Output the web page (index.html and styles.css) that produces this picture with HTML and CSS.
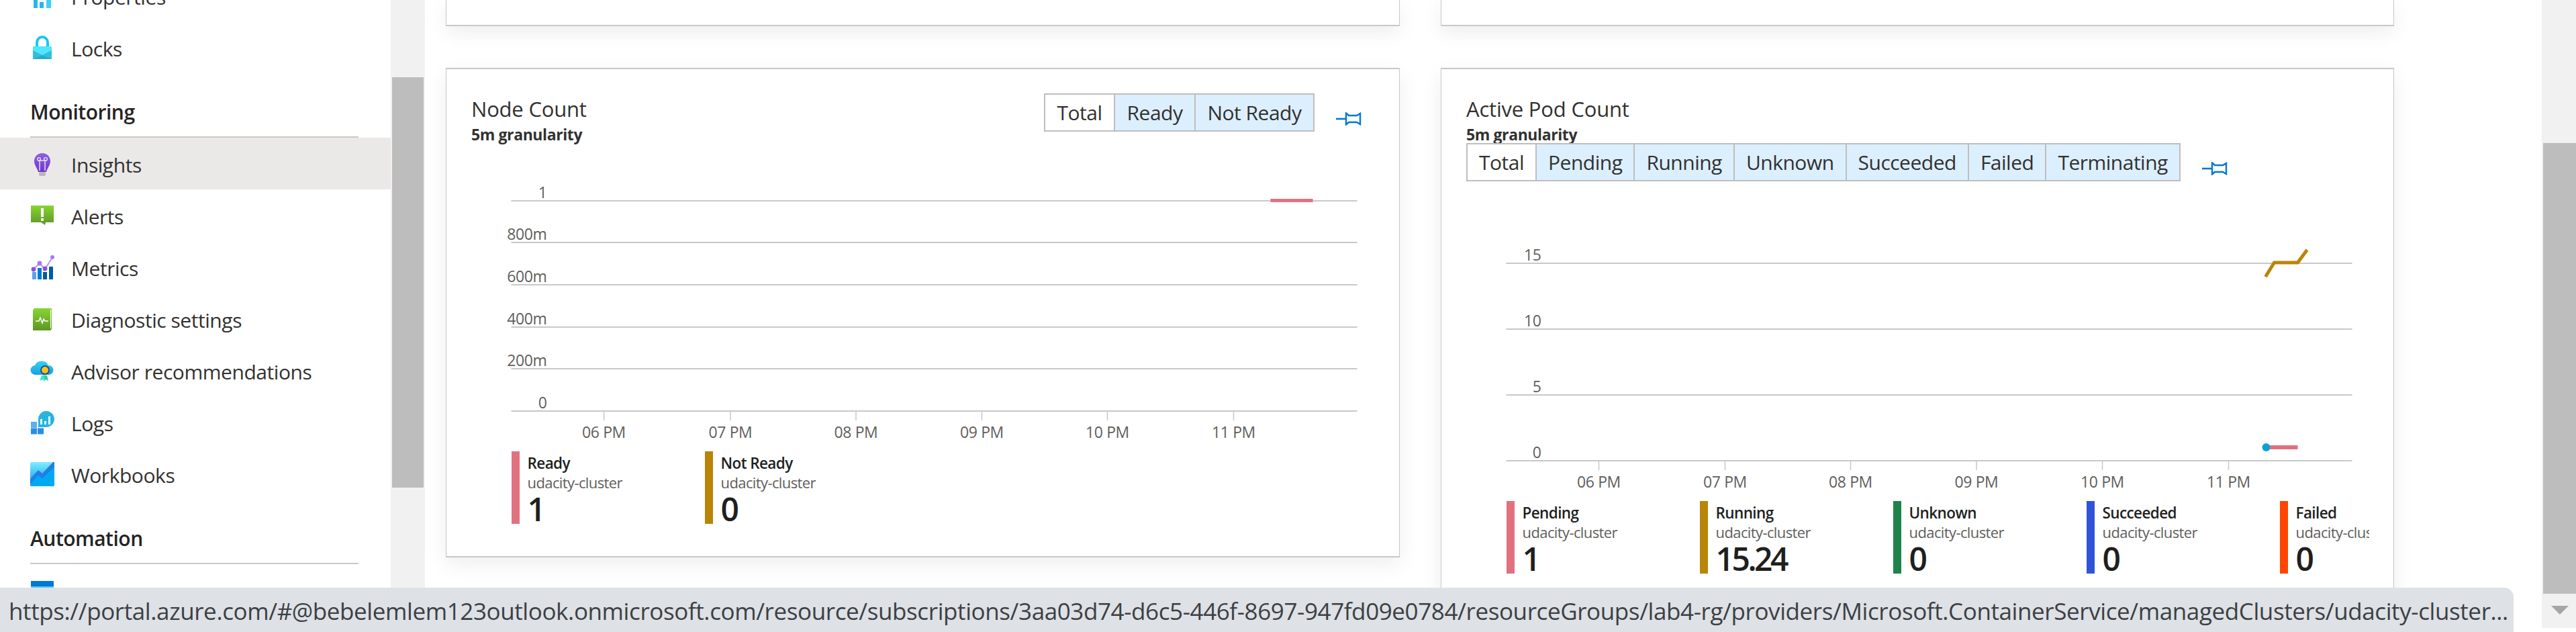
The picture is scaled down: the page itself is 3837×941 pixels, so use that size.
FILE: index.html
```html
<!DOCTYPE html>
<html lang="en">
<head>
<meta charset="utf-8">
<title>udacity-cluster | Insights</title>
<link rel="stylesheet" href="styles.css">
</head>
<body>
<div class="app">
  <nav class="sidebar">
    <ul class="menu">
      <li class="row"><svg class="ico" viewBox="0 0 36 36"><rect x="5" y="22" width="6" height="14" fill="#2bb5e8"/><rect x="14" y="27" width="6" height="9" fill="#2bb5e8"/><rect x="15" y="20" width="4" height="4" fill="#0f7fc4"/><rect x="24" y="22" width="7" height="14" fill="#3fd0f5"/></svg><span>Properties</span></li>
      <li class="row"><svg class="ico" viewBox="0 0 36 36"><path d="M8 17V10a10 10 0 0 1 20 0v7h-4V10a6 6 0 0 0-12 0v7z" fill="#1cc7ee"/><rect x="4" y="16" width="28" height="19" rx="1" fill="#50e6ff"/><path d="M4 35V22l14 7 14-7v13z" fill="#32bedd"/><path d="M4 35l14-6 14 6z" fill="#2aa9cf"/></svg><span>Locks</span></li>
    </ul>
    <h2 class="section">Monitoring</h2>
    <ul class="menu">
      <li class="row selected"><svg class="ico" viewBox="0 0 36 36"><defs><linearGradient id="gb" x1="0" y1="0" x2="0" y2="1"><stop offset="0" stop-color="#8f5fe6"/><stop offset="1" stop-color="#6c3ac6"/></linearGradient></defs><path d="M18 2c7 0 12 5 12 12 0 6-4 9-6 16H12C10 23 6 20 6 14 6 7 11 2 18 2z" fill="url(#gb)"/><rect x="13" y="30" width="10" height="6" rx="2" fill="#b9b9b9"/><path d="M14 28V13M22 28V13M12 13h12" stroke="#e8dcff" stroke-width="1.5" fill="none"/><circle cx="13" cy="11" r="2.4" fill="none" stroke="#e8dcff" stroke-width="1.3"/><circle cx="23" cy="11" r="2.4" fill="none" stroke="#e8dcff" stroke-width="1.3"/></svg><span>Insights</span></li>
      <li class="row"><svg class="ico" viewBox="0 0 36 36"><defs><linearGradient id="ga" x1="0" y1="0" x2="0" y2="1"><stop offset="0" stop-color="#86d633"/><stop offset="1" stop-color="#5e9624"/></linearGradient></defs><path d="M1 3h34v25H23l-1 4-6-4H1z" fill="url(#ga)"/><rect x="16" y="7" width="4" height="13" fill="#fff"/><rect x="16" y="22" width="4" height="4" fill="#fff"/></svg><span>Alerts</span></li>
      <li class="row"><svg class="ico" viewBox="0 0 36 36"><rect x="3" y="25" width="6" height="11" fill="#5ea0ef"/><rect x="11" y="19" width="6" height="17" fill="#0078d4"/><rect x="19" y="25" width="6" height="11" fill="#005ba1"/><rect x="28" y="17" width="6" height="19" fill="#005ba1"/><path d="M5 21l9-9 8 9 11-18" stroke="#b796f9" stroke-width="2" fill="none"/><circle cx="5" cy="21" r="3.4" fill="#8c4fe0"/><circle cx="14" cy="12" r="3.4" fill="#a67af4"/><circle cx="22" cy="20" r="3.4" fill="#8c4fe0"/><circle cx="33" cy="3" r="3" fill="#a67af4"/></svg><span>Metrics</span></li>
      <li class="row"><svg class="ico" viewBox="0 0 36 36"><defs><linearGradient id="gd" x1="0" y1="0" x2="0" y2="1"><stop offset="0" stop-color="#86d633"/><stop offset="1" stop-color="#5e9624"/></linearGradient></defs><path d="M4 5l2-3h26v31l-2 2H4z" fill="url(#gd)"/><path d="M30 4h1v28h-1z" fill="#fff"/><path d="M8 21h5l2-5 3 8 2-6 2 3h5" stroke="#fff" stroke-width="1.5" fill="none"/></svg><span>Diagnostic settings</span></li>
      <li class="row"><svg class="ico" viewBox="0 0 36 36"><defs><linearGradient id="gc" x1="0" y1="0" x2="0" y2="1"><stop offset="0" stop-color="#32d4f5"/><stop offset="1" stop-color="#1b9de2"/></linearGradient></defs><path d="M8 24a7 7 0 0 1-1-14A11 11 0 0 1 27 10a7 7 0 0 1 1 14z" fill="url(#gc)"/><path d="M17 25l-3 8 5-2 1 3 2-10z" fill="#45e0c8"/><path d="M25 25l2 8-4-2-2 3v-9z" fill="#2fc8b0"/><circle cx="22" cy="17" r="7" fill="#1c4f94"/><circle cx="22" cy="17" r="5" fill="#ffc10e"/></svg><span>Advisor recommendations</span></li>
      <li class="row"><svg class="ico" viewBox="0 0 36 36"><rect x="1" y="17" width="9" height="9" fill="#5ab0f0"/><rect x="1" y="26.500" width="9" height="9" fill="#2a8fe0"/><rect x="11" y="26.500" width="9" height="9" fill="#2a8fe0"/><path d="M12 25V14a12 12 0 1 1 12 11z" fill="#28b4dc"/><rect x="15" y="13" width="3" height="8" fill="#e8fbff"/><rect x="21" y="16" width="3" height="5" fill="#e8fbff"/><rect x="27" y="9" width="3" height="12" fill="#e8fbff"/></svg><span>Logs</span></li>
      <li class="row"><svg class="ico" viewBox="0 0 36 36"><defs><linearGradient id="gw" x1="0" y1="0" x2="0" y2="1"><stop offset="0" stop-color="#7eeeff"/><stop offset="1" stop-color="#0094e6"/></linearGradient></defs><rect width="36" height="36" rx="2" fill="url(#gw)"/><path d="M0 25l12-13 6 5L34 0h2v8L18 25l-6-5L0 33z" fill="#1f7fe6"/><path d="M0 33l12-13 6 5L36 8v26a2 2 0 0 1-2 2H2a2 2 0 0 1-2-2z" fill="#00aaf0"/></svg><span>Workbooks</span></li>
    </ul>
    <h2 class="section">Automation</h2>
    <ul class="menu menu-last">
      <li class="row"><svg class="ico" viewBox="0 0 36 36"><rect x="1" width="34" height="8" fill="#0078d4"/><rect x="1" y="8" width="34" height="24" fill="#50c8f0"/></svg><span>CLI / PS</span></li>
    </ul>
  </nav>
  <div class="track"><div class="thumb thumb-left"></div></div>
  <main class="main">
    <section class="card stub"></section>
    <section class="card stub"></section>

    <section class="card card-node">
      <div class="head">
        <div class="titles">
          <h3 class="title">Node Count</h3>
          <p class="sub">5m granularity</p>
        </div>
        <div class="controls node-controls">
          <div class="toggle">
            <button class="tab">Total</button><button class="tab on">Ready</button><button class="tab on">Not Ready</button>
          </div>
          <svg class="pin" viewBox="0 0 38 20"><path d="M0 10h14" stroke="#0078d4" stroke-width="2.600"/><path d="M15 1.500l4 3.500h12l5-3v16l-5-3H19l-4 3.500z" fill="#fff" stroke="#0078d4" stroke-width="2.400"/></svg>
        </div>
      </div>
      <svg class="chart chart-node" viewBox="702.500 213 1380 453">
        <g class="grid"><path d="M762 299H2022M762 361H2022M762 424H2022M762 487H2022M762 549H2022M762 612H2022"/><path class="tick" d="M900 612v14M1088.500 612v14M1275.500 612v14M1463 612v14M1650 612v14M1838 612v14"/></g>
        <g class="ylab"><text x="815" y="295">1</text><text x="815" y="357">800m</text><text x="815" y="420">600m</text><text x="815" y="483">400m</text><text x="815" y="545">200m</text><text x="815" y="608">0</text></g>
        <g class="xlab"><text x="900" y="652">06 PM</text><text x="1088.500" y="652">07 PM</text><text x="1275.500" y="652">08 PM</text><text x="1463" y="652">09 PM</text><text x="1650" y="652">10 PM</text><text x="1838" y="652">11 PM</text></g>
        <rect x="1893" y="296" width="63" height="5" fill="#e2717f"/>
      </svg>
      <div class="legend">
        <div class="item c-red"><span class="l-name">Ready</span><span class="l-sub">udacity-cluster</span><span class="l-val">1</span></div>
        <div class="item c-gold"><span class="l-name">Not Ready</span><span class="l-sub">udacity-cluster</span><span class="l-val">0</span></div>
      </div>
    </section>

    <section class="card card-pod">
      <div class="head head-col">
        <div class="titles">
          <h3 class="title">Active Pod Count</h3>
          <p class="sub">5m granularity</p>
        </div>
        <div class="controls">
          <div class="toggle">
            <button class="tab">Total</button><button class="tab on">Pending</button><button class="tab on">Running</button><button class="tab on">Unknown</button><button class="tab on">Succeeded</button><button class="tab on">Failed</button><button class="tab on">Terminating</button>
          </div>
          <svg class="pin" viewBox="0 0 38 20"><path d="M0 10h14" stroke="#0078d4" stroke-width="2.600"/><path d="M15 1.500l4 3.500h12l5-3v16l-5-3H19l-4 3.500z" fill="#fff" stroke="#0078d4" stroke-width="2.400"/></svg>
        </div>
      </div>
      <svg class="chart chart-pod" viewBox="2184.500 270 1380 470">
        <g class="grid"><path d="M2244 392H3504M2244 490H3504M2244 588H3504M2244 686H3504"/><path class="tick" d="M2382 686v14M2570 686v14M2757 686v14M2944.500 686v14M3132 686v14M3320 686v14"/></g>
        <g class="ylab"><text x="2296" y="388">15</text><text x="2296" y="486">10</text><text x="2296" y="584">5</text><text x="2296" y="682">0</text></g>
        <g class="xlab"><text x="2382" y="726">06 PM</text><text x="2570" y="726">07 PM</text><text x="2757" y="726">08 PM</text><text x="2944.500" y="726">09 PM</text><text x="3132" y="726">10 PM</text><text x="3320" y="726">11 PM</text></g>
        <path d="M3375 412L3388 391H3423L3437 372" fill="none" stroke="#ba8408" stroke-width="5"/>
        <rect x="3376" y="663" width="47" height="6" fill="#e2717f"/>
        <ellipse cx="3376" cy="666" rx="6" ry="6" fill="#0e9fd6"/>
      </svg>
      <div class="legend">
        <div class="item c-red"><span class="l-name">Pending</span><span class="l-sub">udacity-cluster</span><span class="l-val">1</span></div>
        <div class="item c-gold"><span class="l-name">Running</span><span class="l-sub">udacity-cluster</span><span class="l-val">15.24</span></div>
        <div class="item c-green"><span class="l-name">Unknown</span><span class="l-sub">udacity-cluster</span><span class="l-val">0</span></div>
        <div class="item c-blue"><span class="l-name">Succeeded</span><span class="l-sub">udacity-cluster</span><span class="l-val">0</span></div>
        <div class="item c-orange"><span class="l-name">Failed</span><span class="l-sub">udacity-cluster</span><span class="l-val">0</span></div>
      </div>
    </section>
  </main>
  <div class="track track-right"><div class="thumb thumb-right"></div><div class="arrow"></div></div>
</div>
<div class="status">https://portal.azure.com/#@bebelemlem123outlook.onmicrosoft.com/resource/subscriptions/3aa03d74-d6c5-446f-8697-947fd09e0784/resourceGroups/lab4-rg/providers/Microsoft.ContainerService/managedClusters/udacity-cluster...</div>
</body>
</html>
```
FILE: styles.css
```css
* { box-sizing: border-box; }
html, body { margin: 0; height: 941px; overflow: hidden; background: #fff; }
body { font-family: "Open Sans", "Noto Sans", sans-serif; color: #323130; position: relative; }
.app { display: flex; height: 941px; overflow: hidden; }

.sidebar { flex: none; width: 582px; overflow: hidden; }
.menu { list-style: none; margin: 0; padding: 0; }
.menu:first-child { margin-top: -45px; }
.menu-last { margin-top: 4px; }
.row { display: flex; align-items: center; gap: 25px; height: 77px; padding-left: 45px; font-size: 30px; letter-spacing: -0.45px; }
.row span { padding-top: 3px; }
.selected { background: #ebe9e8; }
.ico { flex: none; width: 36px; height: 36px; }
.section { margin: 38px 48px 0 45px; height: 58px; border-bottom: 2px solid #c8c8c8; font-size: 30px; line-height: 40px; font-weight: 600; letter-spacing: -0.5px; color: #252423; }

.track { flex: none; width: 51px; background: #f1f1f1; padding: 115px 2px 0; }
.thumb { background: #bdbdbd; }
.thumb-left { height: 611px; }
.track-right { height: 935px; padding: 213px 0 0 2px; }
.thumb-right { height: 671px; }
.arrow { width: 0; height: 0; margin: 18px 0 0 12px; border-left: 13px solid transparent; border-right: 13px solid transparent; border-top: 13px solid #a6a6a6; }

.main { flex: none; width: 3153px; padding-left: 31px; display: grid; grid-template-columns: 1421px 1420px; column-gap: 61px; grid-template-rows: 39px auto; row-gap: 62px; align-items: start; }
.card { background: #fff; border: 2px solid #c8c8c8; border-left-width: 1.500px; border-right-width: 1.500px; box-shadow: 0 10px 30px rgba(0, 0, 0, .07); }
.stub { height: 39px; border-top: 0; }
.card-node { height: 729px; padding: 39px 0 0 37px; }
.card-pod { height: 800px; padding: 39px 0 0 37px; }

.head { display: flex; justify-content: space-between; height: 71px; padding-right: 56px; }
.head-col { display: block; height: 128px; padding-right: 0; }
.title { margin: 0; font-size: 31px; line-height: 40px; font-weight: 400; letter-spacing: -0.2px; color: #323130; }
.sub { margin: 5px 0 0; font-size: 23px; line-height: 26px; font-weight: 700; letter-spacing: -0.4px; color: #323130; }
.controls { display: flex; align-items: flex-start; gap: 32px; }
.node-controls { margin-top: -3px; }
.toggle { display: flex; height: 57px; border: 2px solid #bebebe; }
.tab { font: inherit; font-size: 30px; letter-spacing: -0.5px; line-height: 50px; height: 53px; padding: 0 17px; margin: 0; border: 0; border-right: 2px solid #bebebe; background: #fff; color: #323130; }
.tab:last-child { border-right: 0; }
.node-controls .tab { padding: 0 17.500px; }
.on { background: #dcefff; }
.pin { flex: none; width: 38px; height: 20px; margin-top: 28px; }

.chart { display: block; width: 1380px; }
.chart-node { height: 453px; }
.chart-pod { height: 470px; }
.grid path { fill: none; stroke: #c8c8c8; stroke-width: 2; }
.grid .tick { stroke-width: 1.500; }
.ylab text { font-size: 23px; letter-spacing: -0.4px; text-anchor: end; fill: #605e5c; }
.xlab text { font-size: 23px; letter-spacing: -0.4px; text-anchor: middle; fill: #605e5c; }

.legend { display: flex; margin: 6px 0 0 59.500px; width: 1285px; overflow: hidden; }
.item { flex: none; width: 288px; height: 108px; padding: 6px 0 0 12px; border-left: 12px solid; display: flex; flex-direction: column; }
.l-name { font-size: 22.500px; line-height: 24px; font-weight: 600; letter-spacing: -0.6px; color: #201f1e; }
.l-sub { font-size: 22px; line-height: 28px; margin-top: 2px; letter-spacing: -0.6px; color: #605e5c; white-space: nowrap; }
.l-val { font-size: 48px; line-height: 48px; margin-top: 2px; font-weight: 600; letter-spacing: -3.500px; color: #201f1e; }
.c-red { border-color: #e2717f; }
.c-gold { border-color: #ba8408; }
.c-green { border-color: #1e8449; }
.c-blue { border-color: #2f54d8; }
.c-orange { border-color: #ff4500; }

.status { position: absolute; left: 0; top: 875px; width: 3744px; height: 66px; padding-left: 13px; background: #dee1e6; border-top-right-radius: 14px; font-size: 35px; line-height: 70px; letter-spacing: -0.4px; color: #3c4043; white-space: nowrap; overflow: hidden; }
```
